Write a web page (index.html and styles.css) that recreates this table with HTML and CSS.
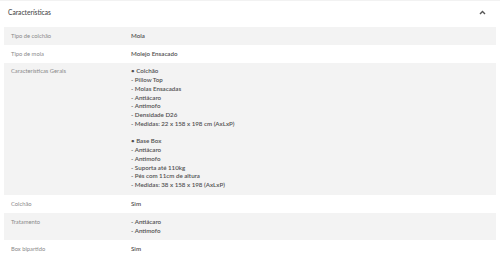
FILE: index.html
```html
<!DOCTYPE html>
<html lang="pt">
<head>
<meta charset="utf-8">
<link rel="stylesheet" href="styles.css">
</head>
<body>
<div class="panel">
  <div class="head">
    <span class="title">Características</span>
    <svg class="chev" width="7" height="5" viewBox="0 0 7 5"><path d="M1 4 L3.5 1.5 L6 4" fill="none" stroke="#555" stroke-width="1.4"/></svg>
  </div>
  <div class="table">
    <div class="row alt"><div class="k">Tipo de colchão</div><div class="v">Mola</div></div>
    <div class="row"><div class="k">Tipo de mola</div><div class="v">Molejo Ensacado</div></div>
    <div class="row alt"><div class="k">Características Gerais</div><div class="v">• Colchão<br>- Pillow Top<br>- Molas Ensacadas<br>- Antiácaro<br>- Antimofo<br>- Densidade D26<br>- Medidas: 22 x 158 x 198 cm (AxLxP)<br><br>• Base Box<br>- Antiácaro<br>- Antimofo<br>- Suporta até 110kg<br>- Pés com 11cm de altura<br>- Medidas: 38 x 158 x 198 (AxLxP)</div></div>
    <div class="row tall"><div class="k">Colchão</div><div class="v">Sim</div></div>
    <div class="row alt"><div class="k">Tratamento</div><div class="v">- Antiácaro<br>- Antimofo</div></div>
    <div class="row tall"><div class="k">Box bipartido</div><div class="v">Sim</div></div>
  </div>
</div>
</body>
</html>
```
FILE: styles.css
```css
html, body {
  margin: 0;
  padding: 0;
  background: #fff;
}
body {
  font-family: Lato, "Noto Sans", sans-serif;
  color: #444;
}
.panel {
  border-top: 1px solid #f2f2f2;
  padding: 0 4px;
}
.head {
  height: 26px;
  box-sizing: border-box;
  display: flex;
  align-items: flex-start;
  justify-content: space-between;
  padding: 7px 10px 0 4px;
}
.title {
  font-size: 6.6px;
  line-height: 9px;
  color: #555;
  font-weight: 600;
}
.chev {
  display: block;
  margin-top: 2px;
}
.table {
  width: 492px;
}
.row {
  display: grid;
  grid-template-columns: 120px 1fr;
  padding: 4.6px 7px;
  font-size: 5.8px;
  line-height: 8.75px;
}
.row.tall {
  padding: 5px 7px;
}
.alt {
  background: #f3f3f3;
}
.k {
  color: #8a8a8a;
}
.v {
  color: #505050;
  font-size: 6.2px;
  font-weight: 600;
}
```
